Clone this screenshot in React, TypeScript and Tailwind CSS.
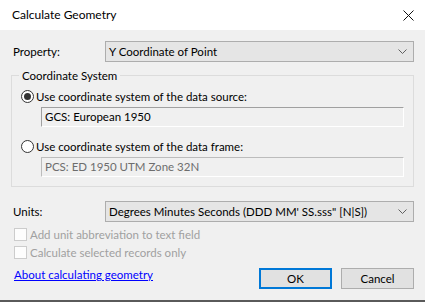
const font = { fontFamily: 'Lato, "Noto Sans", sans-serif' };

function Chevron() {
  return (
    <svg width="9" height="5" viewBox="0 0 9 5" className="shrink-0">
      <path d="M0.5 0.5 L4.5 4.5 L8.5 0.5" fill="none" stroke="#606060" strokeWidth="1" />
    </svg>
  );
}

function Select({ value }: { value: string }) {
  return (
    <div className="flex-1 h-[21px] flex items-center justify-between bg-[#e5e5e5] border border-[#adadad] pl-[3px] pr-[6px]">
      <span className="leading-none whitespace-nowrap">{value}</span>
      <Chevron />
    </div>
  );
}

function Radio({ checked, label }: { checked?: boolean; label: string }) {
  return (
    <div className="flex items-center h-[15px] pl-[9px]">
      <span className="w-[13px] h-[13px] rounded-full border border-[#333333] bg-white flex items-center justify-center">
        {checked && <span className="w-[7px] h-[7px] rounded-full bg-[#333333]" />}
      </span>
      <span className="ml-[2px] whitespace-nowrap">{label}</span>
    </div>
  );
}

function Field({ value, disabled }: { value: string; disabled?: boolean }) {
  return (
    <div
      className={
        "ml-[29px] mr-[9px] h-[20px] flex items-center pl-[3px] border border-b-white border-r-white " +
        (disabled ? "border-t-[#bcbcbc] border-l-[#bcbcbc] text-[#6d6d6d]" : "border-t-[#a0a0a0] border-l-[#a0a0a0] text-black")
      }
    >
      {value}
    </div>
  );
}

function Check({ label }: { label: string }) {
  return (
    <div className="flex items-center h-[15px] pl-[3px]">
      <span className="w-[13px] h-[13px] bg-[#fdfdfd] border border-[#cccccc]" />
      <span className="ml-[3px] text-[#a0a0a0] whitespace-nowrap">{label}</span>
    </div>
  );
}

export default function App() {
  return (
    <div
      style={font}
      className="w-[425px] h-[302px] bg-[#f0f0f0] text-[11.5px] text-black flex flex-col border-b-2 border-[#5a5a5a] overflow-hidden"
    >
      {/* title bar */}
      <div className="h-[30px] bg-white flex items-center justify-between pl-[12px] pr-[12px] shrink-0">
        <span className="text-[12px]">Calculate Geometry</span>
        <svg width="11" height="11" viewBox="0 0 11 11" className="mr-[-1px]">
          <path d="M0.5 0.5 L10.5 10.5 M10.5 0.5 L0.5 10.5" stroke="#111" strokeWidth="1" />
        </svg>
      </div>

      <div className="px-[11px] pt-[11px] flex flex-col">
        <div className="flex items-center">
          <span className="w-[94px] pl-[2px]">Property:</span>
          <Select value="Y Coordinate of Point" />
        </div>

        <fieldset className="mt-[6px] border border-[#dcdcdc] pb-[9px]">
          <legend className="ml-[7px] px-[3px] leading-[15px]">Coordinate System</legend>
          <div className="mt-[6px]">
            <Radio checked label="Use coordinate system of the data source:" />
          </div>
          <div className="mt-[3px]">
            <Field value="GCS: European 1950" />
          </div>
          <div className="mt-[12px]">
            <Radio label="Use coordinate system of the data frame:" />
          </div>
          <div className="mt-[3px]">
            <Field value="PCS: ED 1950 UTM Zone 32N" disabled />
          </div>
        </fieldset>

        <div className="flex items-center mt-[14px]">
          <span className="w-[94px] pl-[2px]">Units:</span>
          <Select value={'Degrees Minutes Seconds (DDD MM\' SS.sss" [N|S])'} />
        </div>

        <div className="mt-[5px] flex flex-col gap-[3px]">
          <Check label="Add unit abbreviation to text field" />
          <Check label="Calculate selected records only" />
        </div>

        <div className="mt-[8px] flex items-start justify-between">
          <a className="text-[#0000ff] underline pl-[3px] leading-[15px] mt-[-1px] cursor-pointer">
            About calculating geometry
          </a>
          <div className="flex gap-[9px]">
            <button className="w-[73px] h-[21px] bg-[#e1e1e1] border-2 border-[#0078d7] leading-none">OK</button>
            <button className="w-[73px] h-[21px] bg-[#e1e1e1] border border-[#adadad] leading-none">Cancel</button>
          </div>
        </div>
      </div>
    </div>
  );
}
